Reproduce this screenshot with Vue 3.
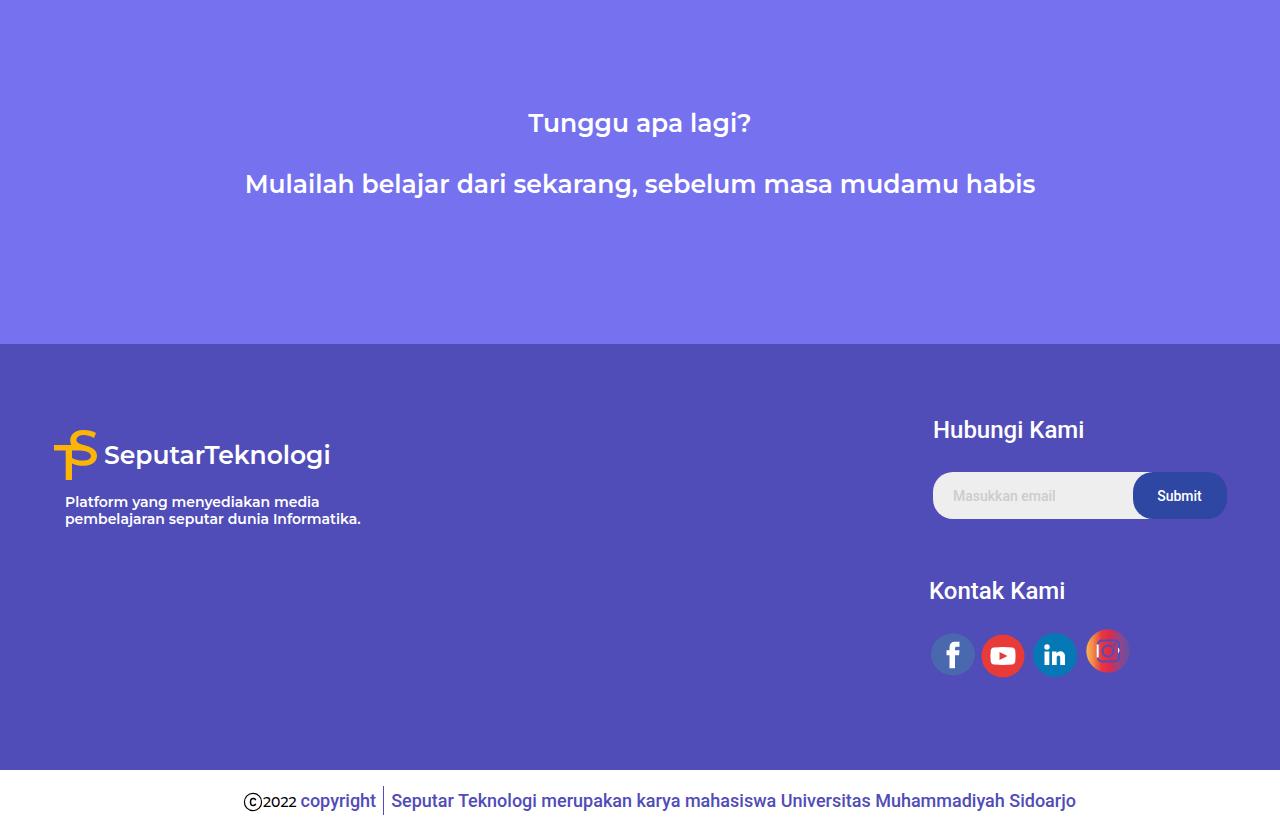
<script setup>
import { ref } from 'vue'

const email = ref('')
</script>

<template>
  <div class="page">
    <section class="hero">
      <p>Tunggu apa lagi?</p>
      <p>Mulailah belajar dari sekarang, sebelum masa mudamu habis</p>
    </section>

    <footer>
      <div class="main">
        <div class="about">
          <div class="brand">
            <svg class="mark" viewBox="0 0 44 50" width="44" height="50" aria-hidden="true">
              <path
                fill="#fbb507" fill-rule="evenodd"
                d="M0 15H17.200C14 7.500 18.500 0 29.500 0C34.500 0 39 1 42 3L40 8C36 5.600 32.500 4.900 29.500 4.900C22.500 4.900 19.500 11 26 14C32 16 43 17 43 26C43 36 28 38 18 33.500V50H11.700V20.500H0ZM18 20.500V28C26 32 37 31.500 37 26C37 21.500 29 20.500 24 20.500Z"
              />
            </svg>
            <span class="name">SeputarTeknologi</span>
          </div>
          <p class="tagline">Platform yang menyediakan media<br />pembelajaran seputar dunia Informatika.</p>
        </div>

        <div class="contact">
          <h2>Hubungi Kami</h2>
          <form @submit.prevent>
            <input v-model="email" type="email" placeholder="Masukkan email" aria-label="Masukkan email" />
            <button type="submit">Submit</button>
          </form>
          <h2 class="second">Kontak Kami</h2>
          <nav class="social">
            <a href="#" class="facebook" aria-label="Facebook">
              <svg viewBox="0 0 46 44" width="46" height="44">
                <ellipse cx="23" cy="22.300" rx="22" ry="21" fill="#4a68ad" />
                <path d="M19.500 36.200V23.300H16.500V18.300H19.500V15.800C19.500 11.600 21.500 9.800 25.500 9.800H29.500V14.800H27C25.400 14.800 25 15.400 25 16.800V18.300H29.500L29 23.300H25V36.200Z" fill="#fff" />
              </svg>
            </a>
            <a href="#" class="youtube" aria-label="YouTube">
              <svg viewBox="0 0 44 44" width="44" height="44">
                <circle cx="22" cy="22" r="21.500" fill="#e83b38" />
                <path d="M13 13.500Q22 12.700 31 13.500Q34 13.800 34.300 17Q34.800 22 34.300 27Q34 30.200 31 30.500Q22 31.300 13 30.500Q10 30.200 9.700 27Q9.200 22 9.700 17Q10 13.800 13 13.500Z" fill="#fff" />
                <path d="M18.500 18L26.500 22L18.500 26Z" fill="#e83b38" />
              </svg>
            </a>
            <a href="#" class="linkedin" aria-label="LinkedIn">
              <svg viewBox="0 0 46 46" width="46" height="46">
                <circle cx="23" cy="23" r="22" fill="#0578b5" />
                <circle cx="15" cy="15" r="2.700" fill="#fff" />
                <path d="M12.500 19.500H17.300V33H12.500ZM20 19.500H24.500V21.300C26 18.500 33 18 33 24.500V33H28.200V25.800C28.200 22.600 24.700 22.600 24.700 25.800V33H20Z" fill="#fff" />
              </svg>
            </a>
            <a href="#" class="instagram" aria-label="Instagram">
              <svg viewBox="0 0 46 44" width="46" height="44">
                <defs>
                  <linearGradient id="sunset" x1="0" x2="1">
                    <stop offset="0" stop-color="#f7b552" />
                    <stop offset="0.150" stop-color="#f28a48" />
                    <stop offset="0.350" stop-color="#e83740" />
                    <stop offset="0.550" stop-color="#d92b4d" />
                    <stop offset="0.780" stop-color="#91458a" />
                    <stop offset="1" stop-color="#6450a2" />
                  </linearGradient>
                </defs>
                <circle cx="23" cy="22" r="21.700" fill="url(#sunset)" />
                <rect x="13" y="11.500" width="21" height="21" rx="4" fill="none" stroke="#504cb8" stroke-width="2" />
                <path d="M12.700 15.500V28.500" stroke="#fff" stroke-width="2" />
                <path d="M33 18.500Q36 21 33 24.500Z" fill="#fff" />
                <circle cx="23" cy="22" r="5.500" fill="none" stroke="#504cb8" stroke-width="2" />
                <circle cx="29.500" cy="15.700" r="1.400" fill="#504cb8" />
              </svg>
            </a>
          </nav>
        </div>
      </div>

      <div class="legal">
        <span class="mark-year">
          <svg class="copy" viewBox="0 0 20 20" width="20" height="20" aria-hidden="true">
            <circle cx="10" cy="10" r="8.600" fill="none" stroke="#000" stroke-width="1.200" />
            <path d="M12.700 8.300C12.300 6.900 11.300 6.400 10.200 6.400C8.400 6.400 7.500 7.700 7.500 10S8.400 13.600 10.200 13.600C11.300 13.600 12.300 13.100 12.700 11.700" fill="none" stroke="#000" stroke-width="1.500" />
          </svg>
          <span class="year">2022</span>
        </span>
        <span class="word">copyright</span>
        <span class="credit">Seputar Teknologi merupakan karya mahasiswa Universitas Muhammadiyah Sidoarjo</span>
      </div>
    </footer>
  </div>
</template>

<style>
body {
  margin: 0;
}
</style>

<style scoped>
.page {
  display: flex;
  flex-direction: column;
  min-height: 100vh;
  font-family: Roboto, "Liberation Sans", sans-serif;
  font-weight: 500;
  color: #fff;
}
p,
h2 {
  margin: 0;
  font-weight: 500;
}
.hero {
  display: flex;
  flex-direction: column;
  gap: 29px;
  padding: 107px 24px 144px;
  background: #7671ef;
  text-align: center;
  font-family: Montserrat, Inter, sans-serif;
  font-size: 25px;
  line-height: 32px;
}
.hero p,
.name,
.tagline {
  font-weight: 600;
}
.main {
  display: flex;
  justify-content: space-between;
  box-sizing: border-box;
  min-height: 426px;
  padding: 70px 53px 90px 54px;
  background: #504cb8;
}
.about {
  padding-top: 16px;
  font-family: Montserrat, Inter, sans-serif;
}
.brand {
  display: flex;
  align-items: center;
  gap: 6px;
}
.name {
  font-size: 25px;
  line-height: 32px;
}
.tagline {
  margin: 14px 0 0 11px;
  font-size: 14px;
  line-height: 17px;
}
.contact {
  width: 298px;
}
h2 {
  margin-left: 4px;
  font-size: 24px;
  line-height: 32px;
}
form {
  display: flex;
  height: 47px;
  margin: 26px 0 56px 4px;
  border-radius: 20px;
  background: linear-gradient(to right, #eee 224px, transparent 224px);
}
input {
  box-sizing: border-box;
  width: 200px;
  padding: 0 0 0 20px;
  border: 0;
  border-radius: 20px 0 0 20px;
  background: transparent;
  color: #333;
  font: 500 14px Roboto, sans-serif;
}
input::placeholder {
  color: #ccc;
  opacity: 1;
}
button {
  flex: 1;
  padding: 0 1px 0 0;
  border: 0;
  border-radius: 20px;
  background: #2d47a2;
  color: #fff;
  font: 500 14px Roboto, sans-serif;
}
.second {
  margin-left: 0;
}
.social {
  display: flex;
  align-items: flex-start;
  gap: 5px;
  margin-top: 22px;
  padding-left: 1px;
}
.social svg,
.mark,
.copy {
  display: block;
}
.facebook {
  padding-top: 3px;
}
.youtube {
  padding-top: 5px;
}
.linkedin {
  padding: 3px 2px 0;
}
.legal {
  display: flex;
  align-items: center;
  justify-content: center;
  box-sizing: border-box;
  min-height: 62px;
  padding: 0 0 2px 39px;
  background: #fff;
  color: #504cb8;
  font-size: 18px;
  line-height: 29px;
}
.mark-year {
  display: flex;
  align-items: center;
  padding-top: 4px;
}
.year {
  color: #000;
  font: 500 14px/20px Montserrat, Inter, sans-serif;
}
.word {
  margin: 0 7px 0 4px;
}
.credit {
  padding-left: 7px;
  border-left: 1px solid #504cb8;
}
</style>
